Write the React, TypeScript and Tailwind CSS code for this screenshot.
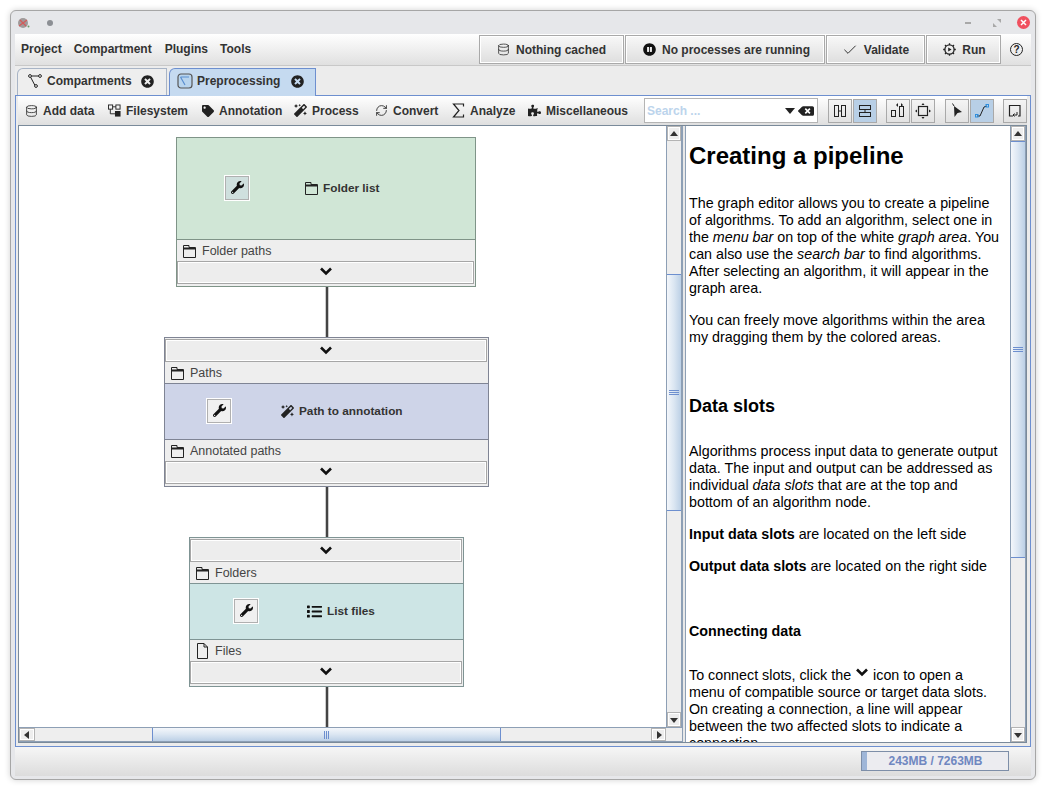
import type { ReactNode } from 'react'
import { Database, Check, RefreshCw } from 'lucide-react'
import {
  FaTag,
  FaMagic,
  FaPuzzlePiece,
  FaPauseCircle,
  FaWrench,
  FaBackspace,
  FaList,
  FaTimesCircle,
} from 'react-icons/fa'

function Chevron({ className = '' }: { className?: string }) {
  return (
    <svg width="14" height="10" viewBox="0 0 14 10" className={className}>
      <path d="M2 2.5 L7 7.5 L12 2.5" fill="none" stroke="#111" strokeWidth="2.6" />
    </svg>
  )
}

function FolderIcon() {
  return (
    <svg width="13" height="13" viewBox="0 0 13 13" className="shrink-0">
      <path d="M.5 12.5V.5H6V2.5H12.5V12.5Z" fill="none" stroke="#222" strokeWidth="1" />
      <path d="M1 3.5H12" fill="none" stroke="#222" strokeWidth="2" />
    </svg>
  )
}

function PageIcon() {
  return (
    <svg width="13" height="16" viewBox="0 0 13 16" className="shrink-0">
      <path d="M1.5 .5H8L11.5 4V15.5H1.5Z M8 .5V4H11.5" fill="none" stroke="#222" />
    </svg>
  )
}

function FilesystemIcon() {
  return (
    <svg width="14" height="14" viewBox="0 0 14 14">
      <rect x="0.5" y="0.5" width="4.5" height="4.5" fill="none" stroke="#222" />
      <rect x="8.5" y="0.5" width="4.5" height="4.5" fill="none" stroke="#222" />
      <rect x="7.5" y="7" width="6" height="6" fill="#222" />
      <path d="M2.5 5V10H7.5M5 2.5H8.5" fill="none" stroke="#222" />
    </svg>
  )
}

function SigmaIcon() {
  return (
    <svg width="13" height="15" viewBox="0 0 13 15" className="shrink-0">
      <path d="M11.5 3.5V1H1.5L7 7.5L1.5 14H11.5V11.5" fill="none" stroke="#222" strokeWidth="1.2" />
    </svg>
  )
}

function GraphIcon() {
  return (
    <svg width="14" height="14" viewBox="0 0 14 14">
      <path d="M2 2L7 11.5M2 2H12" stroke="#222" fill="none" />
      <circle cx="2" cy="2" r="1.4" fill="#fff" stroke="#222" />
      <circle cx="12" cy="2" r="1.4" fill="#fff" stroke="#222" />
      <circle cx="8" cy="12" r="1.4" fill="#fff" stroke="#222" />
    </svg>
  )
}

function PreprocessIcon() {
  return (
    <svg width="16" height="16" viewBox="0 0 16 16">
      <rect x="1" y="1" width="14" height="14" rx="3" fill="#b8d4ee" stroke="#555" strokeWidth="1.2" />
      <path d="M3.5 4H12M3.5 4L8 12" stroke="#5b8fd0" fill="none" strokeWidth="1.2" />
    </svg>
  )
}

function RunIcon() {
  return (
    <svg width="13" height="13" viewBox="0 0 13 13">
      <circle cx="6.5" cy="6.5" r="4.6" fill="none" stroke="#222" strokeWidth="1.3" />
      <path d="M6.5 0.2V2M6.5 11V12.8M0.2 6.5H2M11 6.5H12.8M2 2L3.2 3.2M9.8 9.8L11 11M2 11L3.2 9.8M9.8 3.2L11 2" stroke="#222" strokeWidth="1.3" />
      <path d="M5.2 4.4L8.6 6.5L5.2 8.6Z" fill="#222" />
    </svg>
  )
}

function HelpIcon() {
  return (
    <div className="flex h-[13px] w-[13px] items-center justify-center rounded-full border-[1.5px] border-[#222] text-[10px] font-bold leading-none text-[#222]">
      ?
    </div>
  )
}

function TopButton({ icon, label, className }: { icon: ReactNode; label: string; className: string }) {
  return (
    <div className={`flex h-[29px] items-center justify-center gap-[6px] border border-[#a9a9a9] bg-gradient-to-b from-[#f8f8f8] to-[#dedede] shadow-[inset_0_0_0_1px_#fff] text-[12px] font-bold text-[#333] ${className}`}>
      {icon}
      <span>{label}</span>
    </div>
  )
}

function ToolItem({ icon, label, className }: { icon: ReactNode; label: string; className: string }) {
  return (
    <div className={`flex shrink-0 items-center gap-[5px] whitespace-nowrap text-[12px] font-bold text-[#333] ${className}`}>
      <span className="flex w-[13px] items-center justify-center">{icon}</span>
      <span>{label}</span>
    </div>
  )
}

function ToolButton({ active, children, className = '' }: { active?: boolean; children: ReactNode; className?: string }) {
  return (
    <div
      className={`flex h-[24px] w-[24px] items-center justify-center border border-[#a9a9a9] ${
        active ? 'bg-[#b8cfe6]' : 'bg-gradient-to-b from-[#f4f4f4] to-[#e2e2e2]'
      } ${className}`}
    >
      {children}
    </div>
  )
}

function SlotExpander({ className }: { className: string }) {
  return (
    <div className={`mr-px flex h-[23px] items-center justify-center border border-[#a6a6a6] bg-[#ededed] shadow-[inset_0_0_0_1px_#fff] ${className}`}>
      <Chevron />
    </div>
  )
}

function SlotLabel({ icon, label, border }: { icon: ReactNode; label: string; border: string }) {
  return (
    <div className={`flex h-[22px] items-center gap-[6px] bg-[#eeeeee] pl-[6px] text-[12.5px] text-[#444] ${border}`}>
      {icon}
      <span>{label}</span>
    </div>
  )
}

function WrenchButton({ active }: { active?: boolean }) {
  return (
    <div className={`flex h-[24px] w-[24px] items-center justify-center border border-[#b0b0b0] shadow-[0_0_0_1px_#fff] ${active ? 'bg-[#cfe0de]' : 'bg-[#f0f0f0]'}`}>
      <FaWrench size={13} color="#111" />
    </div>
  )
}

function Node({
  className,
  color,
  colorHeight,
  border,
  input,
  output,
  title,
  icon,
  wrenchClass,
  titleClass,
  active,
}: {
  className: string
  color: string
  colorHeight: string
  border: string
  input?: { icon: ReactNode; label: string }
  output: { icon: ReactNode; label: string }
  title: string
  icon: ReactNode
  wrenchClass: string
  titleClass: string
  active?: boolean
}) {
  return (
    <div className={`absolute flex h-[150px] flex-col border bg-[#eeeeee] ${border} ${className}`}>
      {input && (
        <>
          <div className="h-px" />
          <SlotExpander className="pb-[2px]" />
          <SlotLabel icon={input.icon} label={input.label} border={`border-b pt-[2px] ${border}`} />
        </>
      )}
      <div className={`flex items-center ${color} ${colorHeight}`}>
        <div className={`mb-[2px] ${wrenchClass}`}>
          <WrenchButton active={active} />
        </div>
        <div className={`flex items-center gap-[5px] text-[11.8px] font-bold text-[#333] ${titleClass}`}>
          {icon}
          <span>{title}</span>
        </div>
      </div>
      <SlotLabel icon={output.icon} label={output.label} border={`border-t pt-px ${border}`} />
      <SlotExpander className="pb-[4px]" />
    </div>
  )
}

function Wire({ className }: { className: string }) {
  return <div className={`absolute left-[307px] w-[2px] bg-[#444] shadow-[0_0_0_0.5px_#999] ${className}`} />
}

function ArrowBtn({ dir, className = '' }: { dir: 'up' | 'down' | 'left' | 'right'; className?: string }) {
  const points = { up: '1,7 9,7 5,2', down: '1,3 9,3 5,8', left: '7,1 7,9 2,5', right: '3,1 3,9 8,5' }[dir]
  return (
    <div className={`flex h-[15px] w-[15px] shrink-0 items-center justify-center border border-[#b4b4b4] bg-[#eeeeee] shadow-[inset_0_0_0_1px_#fff] ${className}`}>
      <svg width="10" height="10" viewBox="0 0 10 10">
        <polygon points={points} fill="#333" />
      </svg>
    </div>
  )
}

function Grip({ vertical }: { vertical?: boolean }) {
  return vertical ? (
    <svg width="10" height="6" viewBox="0 0 10 6">
      <path d="M0 .5H10M0 2.5H10M0 4.5H10" stroke="#6d8fcf" />
    </svg>
  ) : (
    <svg width="6" height="8" viewBox="0 0 6 8">
      <path d="M.5 0V8M2.5 0V8M4.5 0V8" stroke="#6d8fcf" />
    </svg>
  )
}

function VScroll({ before, size }: { before: string; size: string }) {
  return (
    <div className="flex h-full w-[16px] shrink-0 flex-col border-x border-[#8d9fb5] bg-[#eeeeee]">
      <ArrowBtn dir="up" className="w-full" />
      <div className={before} />
      <div className={`flex items-center justify-center border-y border-[#6d8fcf] bg-gradient-to-r from-[#f4f7fb] via-[#dbe6f2] to-[#bcd0e6] ${size}`}>
        <Grip vertical />
      </div>
      <div className="flex-1" />
      <ArrowBtn dir="down" className="w-full" />
    </div>
  )
}

const para = 'mb-[15px] text-[14.3px] leading-[17px] text-black'

function DocPane() {
  return (
    <div className="h-full flex-1 overflow-hidden bg-white pl-[3px] pr-[8px] pt-[14px]">
      <h1 className="mb-[23px] text-[24px] font-bold leading-[32px] text-black">Creating a pipeline</h1>
      <p className={para}>
        The graph editor allows you to create a pipeline of algorithms. To add an algorithm, select one in the <i>menu bar</i> on top of the white <i>graph area</i>. You can also use the <i>search bar</i> to find algorithms. After selecting an algorithm, it will appear in the graph area.
      </p>
      <p className={para}>You can freely move algorithms within the area my dragging them by the colored areas.</p>
      <h2 className="mb-[25px] mt-[48px] text-[18px] font-bold leading-[24px] text-black">Data slots</h2>
      <p className={para}>
        Algorithms process input data to generate output data. The input and output can be addressed as individual <i>data slots</i> that are at the top and bottom of an algorithm node.
      </p>
      <p className={para}>
        <b>Input data slots</b> are located on the left side
      </p>
      <p className={para}>
        <b>Output data slots</b> are located on the right side
      </p>
      <h3 className="mb-[27px] mt-[48px] text-[14.3px] font-bold leading-[17px] text-black">Connecting data</h3>
      <p className={para}>
        To connect slots, click the <Chevron className="relative -top-[4px] inline" /> icon to open a menu of compatible source or target data slots. On creating a connection, a line will appear between the two affected slots to indicate a connection.
      </p>
    </div>
  )
}

export default function App() {
  const folder = <FolderIcon />
  return (
    <div className="h-[790px] w-[1046px] bg-white pl-[10px] pt-[10px]" style={{ fontFamily: '"Liberation Sans", Arial, sans-serif' }}>
      <div className="flex h-[770px] w-[1026px] flex-col overflow-hidden rounded-[6px] border border-[#a6a6a6] bg-[#e6e7ea] shadow-[0_0_6px_rgba(0,0,0,0.18)]">
        {/* Title bar */}
        <div className="flex h-[23px] shrink-0 items-center pl-[5px] pr-[5px]">
          <svg width="14" height="14" viewBox="0 0 14 14">
            <circle cx="7" cy="7" r="5" fill="#a09a9a" />
            <path d="M3 10L11 4M4 4L10 10" stroke="#d45a5a" strokeWidth="1.2" />
            <circle cx="12.5" cy="10.5" r="1" fill="#6a9a6a" />
          </svg>
          <div className="ml-[17px] h-[6px] w-[6px] rounded-full bg-[#8c8f94]" />
          <div className="flex-1" />
          <div className="h-[2px] w-[6px] bg-[#a8a8a8]" />
          <svg width="8" height="8" viewBox="0 0 8 8" className="ml-[22px]">
            <path d="M4 0H8V4ZM0 8V4L4 8Z" fill="#a8a8a8" />
          </svg>
          <div className="ml-[16px] flex h-[13px] w-[13px] items-center justify-center rounded-full bg-[#f0505f]">
            <svg width="7" height="7" viewBox="0 0 7 7">
              <path d="M1 1L6 6M6 1L1 6" stroke="#fff" strokeWidth="1.5" />
            </svg>
          </div>
        </div>

        <div className="mx-[4px] mb-[3px] flex flex-1 flex-col bg-[#ececec]">
          {/* Menu bar */}
          <div className="flex h-[31px] shrink-0 bg-gradient-to-b from-white to-[#e0e0e0]">
            <div className="flex flex-1 items-center gap-[12px] pb-[2px] pl-[6px] text-[12px] font-bold text-[#333]">
              <span>Project</span>
              <span className="mr-px">Compartment</span>
              <span>Plugins</span>
              <span>Tools</span>
            </div>
            <div className="flex gap-px pt-px">
              <TopButton className="w-[145px]" icon={<Database size={13} strokeWidth={1.5} />} label="Nothing cached" />
              <TopButton className="w-[200px] pl-[3px]" icon={<FaPauseCircle size={13} color="#111" />} label="No processes are running" />
              <TopButton className="w-[99px]" icon={<Check size={16} strokeWidth={1.5} />} label="Validate" />
              <TopButton className="w-[75px] pl-[2px]" icon={<RunIcon />} label="Run" />
              <div className="flex h-[29px] w-[29px] items-center justify-center">
                <HelpIcon />
              </div>
            </div>
          </div>

          {/* Tabs */}
          <div className="flex h-[30px] shrink-0 items-end gap-[2px] border-t border-[#c8c8c8] pl-[2px]">
            <div className="flex h-[27px] w-[150px] items-center gap-[5px] rounded-tl-[6px] border border-b-0 border-[#a8b4c6] bg-[#eeeeee] pb-[2px] pl-[10px] text-[12px] font-bold text-[#333]">
              <GraphIcon />
              <span className="flex-1">Compartments</span>
              <FaTimesCircle size={13} color="#222" className="mr-[12px]" />
            </div>
            <div className="relative top-px flex h-[28px] w-[147px] items-center gap-[4px] rounded-tl-[6px] border border-b-0 border-[#6d8fcf] bg-[#c5daf0] pb-[3px] pl-[7px] text-[12px] font-bold text-[#333]">
              <PreprocessIcon />
              <span className="flex-1">Preprocessing</span>
              <FaTimesCircle size={13} color="#222" className="mr-[11px]" />
            </div>
          </div>

          {/* Main panel */}
          <div className="flex h-[652px] shrink-0 flex-col border border-[#6d8fcf] bg-[#ececec] pb-[3px] pl-[2px] pr-[3px]">
            {/* Toolbar */}
            <div className="flex h-[29px] shrink-0 items-center bg-gradient-to-b from-white to-[#dfdfdf] pl-[7px]">
              <ToolItem className="w-[83px]" icon={<Database size={14} strokeWidth={1.6} />} label="Add data" />
              <ToolItem className="w-[93px]" icon={<FilesystemIcon />} label="Filesystem" />
              <ToolItem className="w-[93px]" icon={<FaTag size={12} color="#222" />} label="Annotation" />
              <ToolItem className="w-[81px]" icon={<FaMagic size={13} color="#222" />} label="Process" />
              <ToolItem className="w-[77px]" icon={<RefreshCw size={13} strokeWidth={1.7} />} label="Convert" />
              <ToolItem className="w-[76px]" icon={<SigmaIcon />} label="Analyze" />
              <ToolItem className="w-[116px]" icon={<FaPuzzlePiece size={13} color="#222" />} label="Miscellaneous" />
              <div className="flex h-[25px] w-[174px] shrink-0 items-center border border-[#b4b4b4] bg-white pl-[2px] pr-[3px] text-[12px] font-bold text-[#bcd4ec]">
                <span className="flex-1">Search ...</span>
                <svg width="10" height="6" viewBox="0 0 10 6" className="mr-[3px]">
                  <polygon points="0,0 10,0 5,6" fill="#222" />
                </svg>
                <FaBackspace size={16} color="#222" />
              </div>
              <div className="ml-[10px] flex">
                <ToolButton>
                  <svg width="14" height="14" viewBox="0 0 14 14">
                    <rect x="1.5" y="1.5" width="4" height="11" fill="none" stroke="#222" />
                    <rect x="8.5" y="1.5" width="4" height="11" fill="none" stroke="#222" />
                    <path d="M5.5 7H8.5" stroke="#222" />
                  </svg>
                </ToolButton>
                <ToolButton active className="ml-px">
                  <svg width="14" height="14" viewBox="0 0 14 14">
                    <rect x="1.5" y="1.5" width="11" height="4" fill="none" stroke="#222" />
                    <rect x="1.5" y="8.5" width="11" height="4" fill="none" stroke="#222" />
                    <path d="M7 5.5V8.5" stroke="#222" />
                  </svg>
                </ToolButton>
                <ToolButton className="ml-[9px]">
                  <svg width="16" height="16" viewBox="0 0 16 16">
                    <rect x="1.5" y="7.5" width="4" height="6" fill="none" stroke="#222" />
                    <rect x="9.5" y="3.5" width="4" height="10" fill="none" stroke="#222" />
                    <path d="M6 2L8 4V0ZM13 2L11 4V0Z" fill="#222" />
                  </svg>
                </ToolButton>
                <ToolButton className="ml-px">
                  <svg width="16" height="16" viewBox="0 0 16 16">
                    <rect x="3.5" y="3.5" width="9" height="9" fill="none" stroke="#222" strokeWidth="1.2" />
                    <path d="M8 0L6.5 2H9.5ZM8 16L6.5 14H9.5ZM0 8L2 6.5V9.5ZM16 8L14 6.5V9.5Z" fill="#222" />
                  </svg>
                </ToolButton>
                <ToolButton className="ml-[10px]">
                  <svg width="14" height="16" viewBox="0 0 14 16">
                    <path d="M4 3L12 9L7.5 10L4.5 14Z" fill="#222" />
                    <path d="M2.5 0.5L4 3" stroke="#222" />
                  </svg>
                </ToolButton>
                <ToolButton active className="ml-px">
                  <svg width="16" height="16" viewBox="0 0 16 16">
                    <path d="M3 13L6 13L10 4L13 3" fill="none" stroke="#222" />
                    <rect x="1.5" y="11.5" width="2.5" height="2.5" fill="none" stroke="#2d8fe0" />
                    <rect x="12" y="1.5" width="2.5" height="2.5" fill="none" stroke="#2d8fe0" />
                  </svg>
                </ToolButton>
                <ToolButton className="ml-[9px]">
                  <svg width="16" height="16" viewBox="0 0 16 16">
                    <path d="M6 13H2.5V2.5H13V13H11" fill="none" stroke="#222" strokeWidth="1.2" />
                    <path d="M10 9V12H6M7.5 10.5L6 12L7.5 13.5" fill="none" stroke="#222" />
                  </svg>
                </ToolButton>
              </div>
            </div>

            {/* Content */}
            <div className="flex min-h-0 flex-1 border border-[#7a8a9a] bg-white">
              <div className="flex h-full w-[663px] shrink-0 flex-col">
                <div className="flex min-h-0 flex-1">
                  <div className="relative flex-1 overflow-hidden bg-white">
                    <Wire className="top-[161px] h-[50px]" />
                    <Wire className="top-[361px] h-[50px]" />
                    <Wire className="top-[561px] h-[40px]" />
                    <Node
                      className="left-[157px] top-[11px] w-[300px]"
                      color="bg-[#d0e6d6]"
                      colorHeight="h-[101px]"
                      border="border-[#7f9488]"
                      output={{ icon: folder, label: 'Folder paths' }}
                      title="Folder list"
                      icon={folder}
                      wrenchClass="ml-[48px]"
                      titleClass="ml-[56px]"
                      active
                    />
                    <Node
                      className="left-[145px] top-[211px] w-[325px]"
                      color="bg-[#ced4e8]"
                      colorHeight="h-[55px]"
                      border="border-[#7f8494]"
                      input={{ icon: folder, label: 'Paths' }}
                      output={{ icon: folder, label: 'Annotated paths' }}
                      title="Path to annotation"
                      icon={<FaMagic size={13} color="#222" />}
                      wrenchClass="ml-[42px]"
                      titleClass="ml-[50px]"
                    />
                    <Node
                      className="left-[170px] top-[411px] w-[275px]"
                      color="bg-[#cde5e5]"
                      colorHeight="h-[55px]"
                      border="border-[#7f9494]"
                      input={{ icon: folder, label: 'Folders' }}
                      output={{ icon: <PageIcon />, label: 'Files' }}
                      title="List files"
                      icon={<FaList size={15} color="#111" />}
                      wrenchClass="ml-[44px]"
                      titleClass="ml-[49px]"
                    />
                  </div>
                  <VScroll before="h-[133px]" size="h-[237px]" />
                </div>
                <div className="flex h-[15px] shrink-0 border-y border-[#8d9fb5] bg-[#eeeeee]">
                  <ArrowBtn dir="left" className="h-full w-[16px]" />
                  <div className="w-[117px]" />
                  <div className="flex w-[349px] items-center justify-center border-x border-[#6d8fcf] bg-gradient-to-b from-[#f4f7fb] via-[#dbe6f2] to-[#bcd0e6]">
                    <Grip />
                  </div>
                  <div className="flex-1" />
                  <ArrowBtn dir="right" className="h-full" />
                  <div className="w-[16px]" />
                </div>
              </div>
              <div className="h-full w-[4px] shrink-0 border-x border-[#8d9fb5] bg-[#e8e8e8]" />
              <DocPane />
              <VScroll before="h-0" size="h-[417px]" />
            </div>
          </div>

          {/* Status bar */}
          <div className="flex flex-1 items-start justify-end bg-gradient-to-b from-[#f6f6f6] to-[#dcdcdc] pr-[22px] pt-[4px]">
            <div className="flex h-[20px] w-[148px] items-center border border-[#7d8ea8] bg-[#ececf0]">
              <div className="h-full w-[5px] bg-[#9fb6d8]" />
              <span className="flex-1 pr-[4px] text-center text-[12px] font-bold text-[#6f87c0]">243MB / 7263MB</span>
            </div>
          </div>
        </div>
      </div>
    </div>
  )
}
